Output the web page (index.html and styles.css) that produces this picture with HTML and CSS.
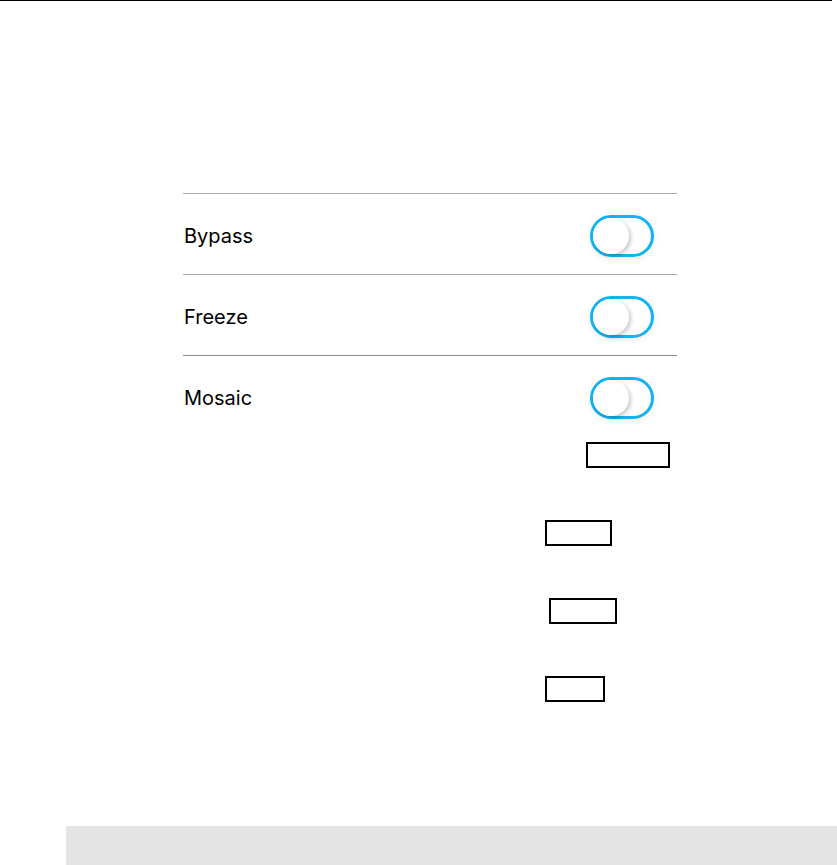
FILE: index.html
```html
<!DOCTYPE html>
<html lang="en">
<head>
  <meta charset="UTF-8">
  <title>Effects</title>
  <link rel="stylesheet" href="styles.css">
</head>
<body>

  <div class="topline"></div>

  <div class="panel">
    <div class="row">
      <span class="label">Bypass</span>
      <div class="toggle"><div class="knob"></div></div>
    </div>
    <div class="row">
      <span class="label">Freeze</span>
      <div class="toggle"><div class="knob"></div></div>
    </div>
    <div class="row dark">
      <span class="label">Mosaic</span>
      <div class="toggle"><div class="knob"></div></div>
    </div>

    <div class="fields">
      <div class="field f1"></div>
      <div class="field f2"></div>
      <div class="field f3"></div>
      <div class="field f4"></div>
    </div>
  </div>

  <div class="bar"></div>

</body>
</html>
```

FILE: styles.css
```css
body {
  margin: 0;
  font-family: Inter, "Noto Sans", sans-serif;
  color: #000;
  background: #fff;
}

.topline {
  width: 832px;
  height: 1px;
  background: #000;
}

.panel {
  width: 494px;
  margin: 192px 0 0 183px;
}

.row {
  display: flex;
  align-items: center;
  justify-content: space-between;
  height: 80px;
  border-top: 1px solid #a9a9a9;
  padding: 0 23px 0 1px;
}

.row.dark {
  border-top-color: #8c8c8c;
}

.label {
  font-size: 20px;
  margin-top: 4px;
}

.toggle {
  position: relative;
  width: 64px;
  height: 42px;
  margin-top: 3px;
  box-sizing: border-box;
  border: 3px solid #10b4f2;
  border-radius: 21px;
  background: #fff;
  box-shadow: 0 2px 6px rgba(0, 0, 0, 0.08);
}

.knob {
  position: absolute;
  left: 0;
  top: 0;
  width: 36px;
  height: 36px;
  border-radius: 50%;
  background: #fff;
  box-shadow: 2px 2px 4px rgba(0, 0, 0, 0.22);
}

.fields {
  display: flex;
  flex-direction: column;
  gap: 52px;
  margin-top: 6px;
}

.field {
  height: 26px;
  box-sizing: border-box;
  border: 2px solid #000;
}

.f1 { width: 84px; margin-left: 403px; }
.f2 { width: 67px; margin-left: 362px; }
.f3 { width: 68px; margin-left: 366px; }
.f4 { width: 60px; margin-left: 362px; }

.bar {
  height: 39px;
  margin: 124px 0 0 66px;
  background: #e4e4e4;
}
```
